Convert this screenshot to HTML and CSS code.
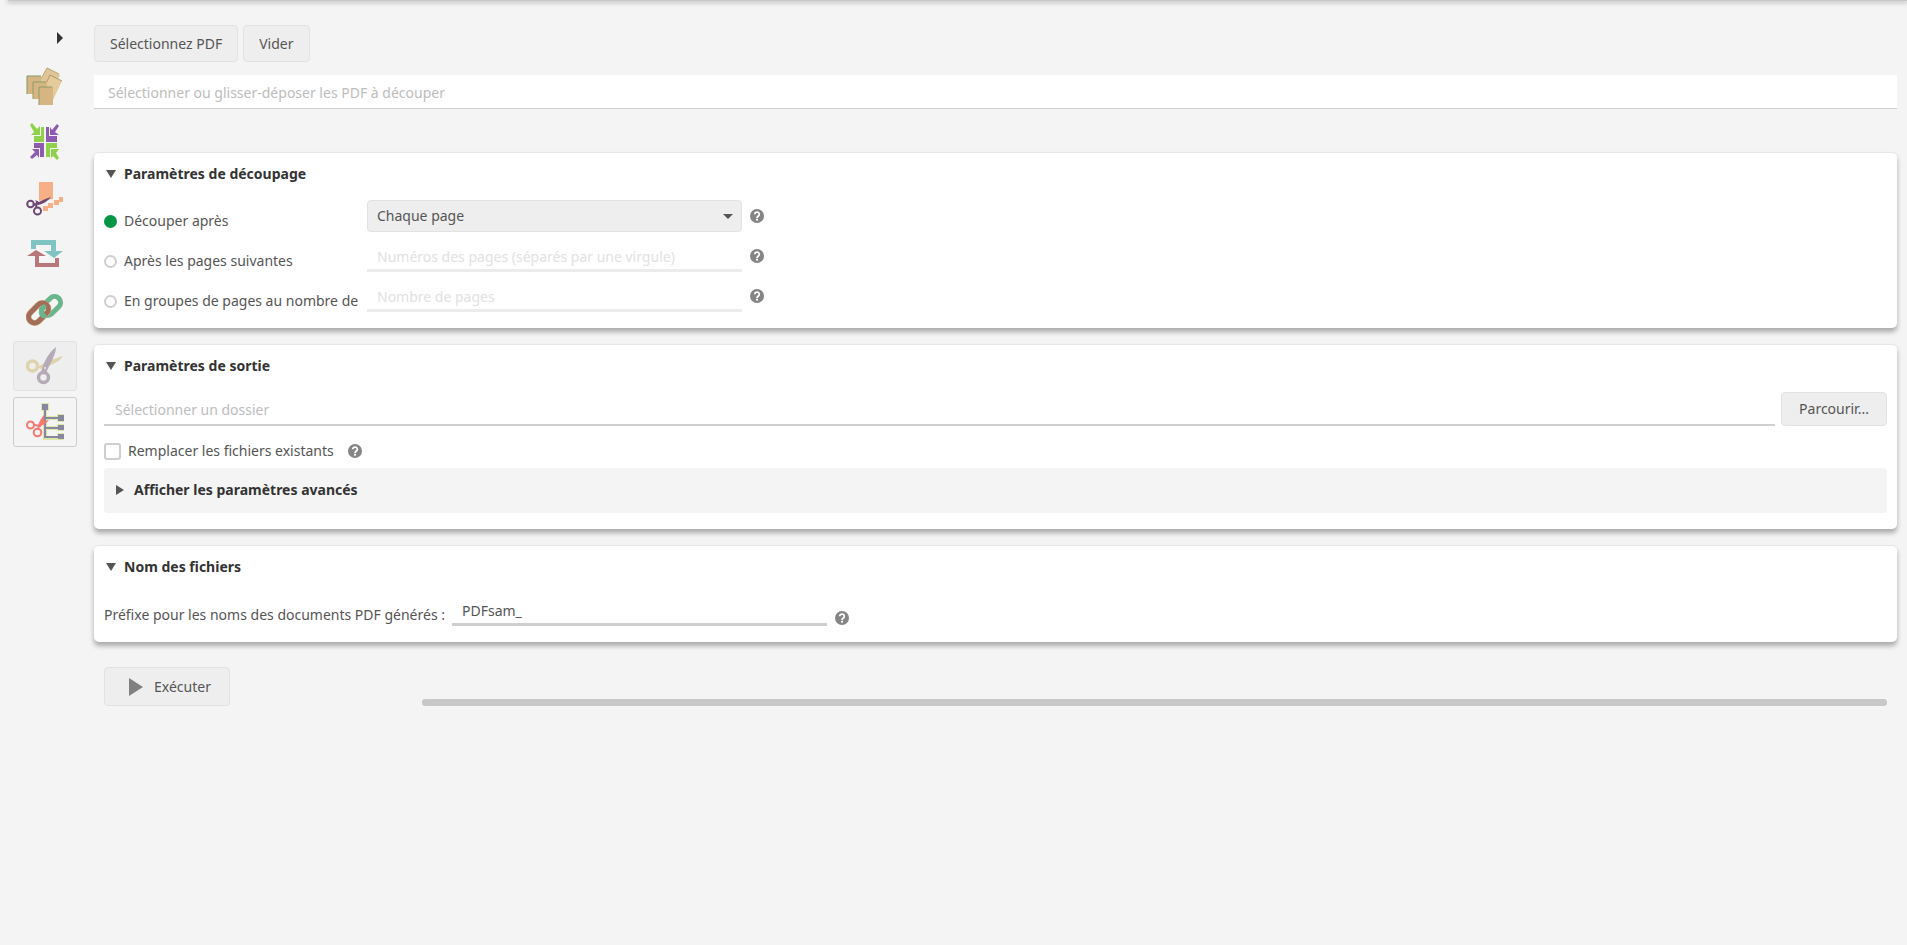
FILE: index.html
```
<!DOCTYPE html>
<html lang="fr">
<head>
  <meta charset="UTF-8">
  <meta name="viewport" content="width=device-width, initial-scale=1.0">
  <title>PDFsam - Découper</title>
  <link rel="stylesheet" href="styles.css">
</head>
<body>
  <svg width="0" height="0" class="defs" aria-hidden="true">
    <symbol id="help" viewBox="0 0 14 14">
      <circle cx="7" cy="7" r="7" fill="#858585"/>
      <path d="M4.7 5.3a2.3 2.2 0 1 1 3.7 1.7C7.5 7.6 7 7.9 7 9" fill="none" stroke="#fff" stroke-width="1.7"/>
      <rect x="6" y="9.8" width="2" height="1.8" fill="#fff"/>
    </symbol>
  </svg>

  <div class="top-shadow"></div>
  <div class="app">
    <nav class="sidebar">
      <button class="expand" aria-label="Développer"><span></span></button>

      <button class="tool" aria-label="Fusionner">
        <svg width="38" height="40" viewBox="0 0 38 40">
          <path d="M21 2l13 7-11 22-13-7z" fill="#e0c596"/>
          <path d="M10 22L21 2l12 6" fill="none" stroke="#b79f6f"/>
          <path d="M24 9l12 6-10 21-12-6z" fill="#e3cb9c"/>
          <path d="M16 26l8-17 12 6" fill="none" stroke="#b0986b"/>
          <path d="M1 10h14v18H1z" fill="#d6b583"/>
          <path d="M1 28V10h14" fill="none" stroke="#7f9a68"/>
          <path d="M7 16h14v17H7z" fill="#d6b583"/>
          <path d="M7 33V16h13" fill="none" stroke="#8c9c6a"/>
          <path d="M13 21h14v18H13z" fill="#d6b583"/>
          <path d="M13 39V21h13" fill="none" stroke="#8c9c6a"/>
        </svg>
      </button>

      <button class="tool" aria-label="Fusion alternée">
        <svg width="38" height="38" viewBox="0 0 38 38">
          <path d="M15 4h3v15H8v-6h7zM20 20h11v5h-7v9h-4z" fill="#8fd14a"/>
          <path d="M20 4h3v9h8v6H20zM8 20h10v14h-4v-9H8z" fill="#8e5bb0"/>
          <path d="M14 3v9H5l3-3-4-7 2-2 5 6zM25 35v-9h8l-3 4 3 5-2 2-4-4z" fill="#8fd14a"/>
          <path d="M24 4v8h9l-4-3 4-6-2-2-5 6zM13 35v-9H6l3 3-5 5 2 2 5-4z" fill="#8e5bb0"/>
        </svg>
      </button>

      <button class="tool" aria-label="Extraire">
        <svg width="38" height="38" viewBox="0 0 38 38">
          <path d="M13 3h14v17l-14 2z" fill="#f6af87"/>
          <path d="M17 27h5v5h-5zM22 24h5v5h-5zM28 21h5v5h-5zM33 18h4v5h-4z" fill="#f6af87"/>
          <g fill="none" stroke="#6d4872">
            <circle cx="4.5" cy="25" r="3.3" stroke-width="2"/>
            <circle cx="11.5" cy="32" r="3.5" stroke-width="2"/>
            <path d="M7 26l7-2M10 29l1-7" stroke-width="2"/>
          </g>
          <path d="M9 21l4 2c4-2 8-4 12-5-3 4-8 7-13 8z" fill="#6d4872"/>
        </svg>
      </button>

      <button class="tool" aria-label="Faire pivoter">
        <svg width="38" height="38" viewBox="0 0 38 38">
          <path d="M5 14V5h25v11h7l-9 7-10-7h7v-6H10v4z" fill="#7fc4c2"/>
          <path d="M33 23v9H9V21H1l9-6 10 6h-7v7h16v-5z" fill="#b7777b"/>
        </svg>
      </button>

      <button class="tool" aria-label="Fusion et mélange">
        <svg width="38" height="38" viewBox="0 0 38 38">
          <g fill="none" stroke-width="5" stroke-linecap="round">
            <rect x="14" y="9" width="22" height="12" rx="6" transform="rotate(-45 25 15)" stroke="#69b58c"/>
            <rect x="1" y="16" width="23" height="12" rx="6" transform="rotate(-45 12.5 22)" stroke="#d9bb8e" stroke-width="6"/>
            <rect x="1" y="16" width="23" height="12" rx="6" transform="rotate(-45 12.5 22)" stroke="#a26e5a"/>
            <path d="M18 25c-4-2-3-6 0-9" stroke="#69b58c"/>
          </g>
        </svg>
      </button>

      <button class="tool current" aria-label="Découper">
        <svg width="38" height="38" viewBox="0 0 38 38">
          <path d="M12 20C20 14 28 12 37 9c-3 6-13 9-22 13z" fill="#dfd3ad"/>
          <circle cx="6.5" cy="19" r="5" fill="none" stroke="#dfd3ad" stroke-width="3.5"/>
          <path d="M15 25C18 15 22 6 30 0c0 9-7 17-10 27z" fill="#b5abb8"/>
          <circle cx="17.5" cy="30.5" r="5" fill="none" stroke="#b5abb8" stroke-width="3.5"/>
          <circle cx="19" cy="21" r="1" fill="#eee"/>
        </svg>
      </button>

      <button class="tool focused" aria-label="Découper par signets">
        <svg width="38" height="38" viewBox="0 0 38 38">
          <path d="M19 6v29h13M19 15h13M19 25h13" fill="none" stroke="#dbe8a8" stroke-width="4"/>
          <path d="M15 0h8v8h-8zM31 11h7v8h-7zM31 21h7v7h-7zM31 30h7v7h-7z" fill="#dbe8a8"/>
          <path d="M19 6v28h13M19 15h13M19 25h13" fill="none" stroke="#8788a0" stroke-width="2"/>
          <path d="M16 1h6v6h-6zM32 12h6v6h-6zM32 22h6v5h-6zM32 31h6v5h-6z" fill="#8788a0"/>
          <g fill="none" stroke="#f47772" stroke-width="2">
            <circle cx="4.5" cy="22" r="3.5"/>
            <circle cx="11.5" cy="29.5" r="3.8"/>
            <path d="M8 22l7 1M12 25l2-3"/>
          </g>
          <path d="M12 23c1-4 3-8 6-11v6l5-1c-2 3-6 5-10 7z" fill="#f47772"/>
        </svg>
      </button>
    </nav>

    <main class="content">
      <div class="toolbar">
        <button class="btn btn-tall">Sélectionnez PDF</button>
        <button class="btn btn-tall">Vider</button>
      </div>
      <input type="text" class="file-input" aria-label="Fichier PDF" placeholder="Sélectionner ou glisser-déposer les PDF à découper">

      <section class="card">
        <h2><span class="arrow-down"></span>Paramètres de découpage</h2>
        <div class="split-grid">
          <label class="radio"><input type="radio" name="split" checked>Découper après</label>
          <select aria-label="Découper après">
            <option>Chaque page</option>
            <option>Pages paires</option>
            <option>Pages impaires</option>
          </select>
          <svg class="help"><use href="#help"/></svg>

          <label class="radio"><input type="radio" name="split">Après les pages suivantes</label>
          <input type="text" class="field" aria-label="Numéros des pages" placeholder="Numéros des pages (séparés par une virgule)" disabled>
          <svg class="help"><use href="#help"/></svg>

          <label class="radio"><input type="radio" name="split">En groupes de pages au nombre de</label>
          <input type="text" class="field" aria-label="Nombre de pages" placeholder="Nombre de pages" disabled>
          <svg class="help"><use href="#help"/></svg>
        </div>
      </section>

      <section class="card">
        <h2><span class="arrow-down"></span>Paramètres de sortie</h2>
        <div class="output-row">
          <input type="text" class="folder-input" aria-label="Dossier" placeholder="Sélectionner un dossier">
          <button class="btn btn-browse">Parcourir...</button>
        </div>
        <div class="check-row">
          <label class="check"><input type="checkbox">Remplacer les fichiers existants</label>
          <svg class="help"><use href="#help"/></svg>
        </div>
        <button class="advanced"><span class="arrow-right"></span>Afficher les paramètres avancés</button>
      </section>

      <section class="card">
        <h2><span class="arrow-down"></span>Nom des fichiers</h2>
        <div class="prefix-row">
          <label for="prefix">Préfixe pour les noms des documents PDF générés :</label>
          <input type="text" class="field" id="prefix" value="PDFsam_">
          <svg class="help"><use href="#help"/></svg>
        </div>
      </section>

      <div class="footer">
        <button class="btn btn-run">
          <svg width="14" height="18" viewBox="0 0 14 18"><path d="M0 0l14 9-14 9z" fill="#808080"/></svg>
          Exécuter
        </button>
        <div class="progress"></div>
      </div>
    </main>
  </div>
</body>
</html>
```
FILE: styles.css
```
:root {
  --bg: #f4f4f4;
  --button: #eeeeee;
  --border: #e2e2e2;
  --line: #cfcfcf;
  --text: #555555;
  --title: #333333;
  --hint: #bdbdbd;
  --accent: #009646;
}

* {
  box-sizing: border-box;
}

body {
  margin: 0;
  background: var(--bg);
  color: var(--text);
  font: 14px/22px "Noto Sans", "Open Sans", sans-serif;
}

button, input, select {
  margin: 0;
  font: inherit;
  color: inherit;
}

input:focus {
  outline: none;
}

.defs {
  display: block;
}

.top-shadow {
  height: 1px;
  margin-left: 8px;
  background: #c8c8c8;
  box-shadow: 0 1px 4px 1px #bbbbbb;
}

.app {
  display: flex;
}

/* sidebar */
.sidebar {
  display: flex;
  flex: none;
  flex-direction: column;
  gap: 6px;
  width: 94px;
  padding: 22px 18px 0 13px;
}

.expand {
  display: flex;
  align-items: center;
  align-self: flex-end;
  width: 20px;
  height: 32px;
  padding: 0 0 2px 1px;
  border: none;
  background: none;
}

.expand span {
  border: 6px solid transparent;
  border-left-color: var(--title);
  border-right: none;
}

.tool {
  display: flex;
  align-items: center;
  justify-content: center;
  width: 64px;
  height: 50px;
  padding: 0;
  border: 1px solid transparent;
  border-radius: 3px;
  background: none;
}

.tool.current {
  background: var(--button);
  border-color: var(--border);
}

.tool.focused {
  border-color: #cccccc;
}

/* main column */
.content {
  flex: 1;
  min-width: 0;
  padding: 24px 10px 0 0;
}

.btn {
  border: 1px solid var(--border);
  border-radius: 4px;
  background: var(--button);
  padding: 0 15px;
  cursor: pointer;
}

.toolbar {
  display: flex;
  gap: 5px;
  margin-bottom: 13px;
}

.btn-tall {
  height: 37px;
}

.file-input {
  display: block;
  width: 100%;
  height: 34px;
  margin-bottom: 43px;
  padding: 2px 14px 0;
  border: none;
  border-bottom: 1px solid var(--line);
  background: white;
}

::placeholder {
  color: var(--hint);
  opacity: 1;
}

.card {
  margin-bottom: 16px;
  padding: 0 10px 16px;
  border-top: 1px solid #e6e6e6;
  border-radius: 5px;
  background: white;
  box-shadow: 0 4px 5px rgba(0, 0, 0, 0.3);
}

h2 {
  display: flex;
  align-items: center;
  gap: 8px;
  margin: 0;
  height: 43px;
  padding-bottom: 2px;
  font-size: 14px;
  color: var(--title);
}

.arrow-down {
  margin-left: 2px;
  border: 5px solid transparent;
  border-top: 8px solid var(--text);
  border-bottom: none;
}

.arrow-right {
  border: 5px solid transparent;
  border-left: 8px solid var(--text);
  border-right: none;
}

.help {
  flex: none;
  width: 14px;
  height: 14px;
}

.split-grid {
  display: grid;
  grid-template-columns: 255px 375px 14px;
  grid-auto-rows: 32px;
  align-items: center;
  gap: 8px;
  padding-top: 4px;
}

.radio {
  display: flex;
  align-items: center;
  gap: 7px;
  padding-top: 10px;
  white-space: nowrap;
}

.radio input {
  appearance: none;
  flex: none;
  width: 13px;
  height: 13px;
  border: 2px solid var(--line);
  border-radius: 50%;
}

.radio input:checked {
  border-color: var(--accent);
  background: var(--accent);
}

select {
  appearance: none;
  width: 100%;
  height: 32px;
  padding: 0 9px;
  border: 1px solid var(--border);
  border-radius: 4px;
  background: var(--button) url("data:image/svg+xml,%3Csvg xmlns='http://www.w3.org/2000/svg' width='10' height='5'%3E%3Cpath d='M0 0h10L5 5z' fill='%23555'/%3E%3C/svg%3E") no-repeat right 8px center;
}

.field {
  width: 375px;
  height: 32px;
  padding: 4px 10px 0;
  border: none;
  border-bottom: 3px solid var(--line);
  background: none;
}

.field:disabled {
  border-color: #ececec;
}

.field:disabled::placeholder {
  color: #e2e2e2;
}

.output-row {
  display: flex;
  gap: 6px;
  padding-top: 4px;
}

.folder-input {
  flex: 1;
  height: 34px;
  padding: 2px 11px 0;
  border: none;
  border-bottom: 2px solid var(--line);
}

.btn-browse {
  width: 106px;
  height: 34px;
}

.check-row {
  display: flex;
  align-items: center;
  gap: 14px;
  height: 42px;
  padding-top: 8px;
}

.check {
  display: flex;
  align-items: center;
  gap: 7px;
}

.check input {
  appearance: none;
  width: 17px;
  height: 17px;
  border: 2px solid var(--line);
  border-radius: 3px;
}

.advanced {
  display: flex;
  align-items: center;
  gap: 10px;
  width: 100%;
  height: 45px;
  padding: 0 12px 2px;
  border: none;
  border-radius: 4px;
  background: var(--bg);
  color: var(--title);
  font-weight: bold;
}

.prefix-row {
  display: flex;
  align-items: flex-end;
  gap: 7px;
  padding-top: 5px;
}

.prefix-row .help {
  margin: 0 1px 1px;
}

/* run button and progress */
.footer {
  display: flex;
  align-items: flex-end;
  gap: 192px;
  padding: 9px 10px 0;
}

.btn-run {
  display: flex;
  flex: none;
  align-items: center;
  gap: 11px;
  width: 126px;
  height: 39px;
  padding-left: 24px;
}

.progress {
  flex: 1;
  height: 7px;
  border-radius: 3px;
  background: #c8c8c8;
}
```
